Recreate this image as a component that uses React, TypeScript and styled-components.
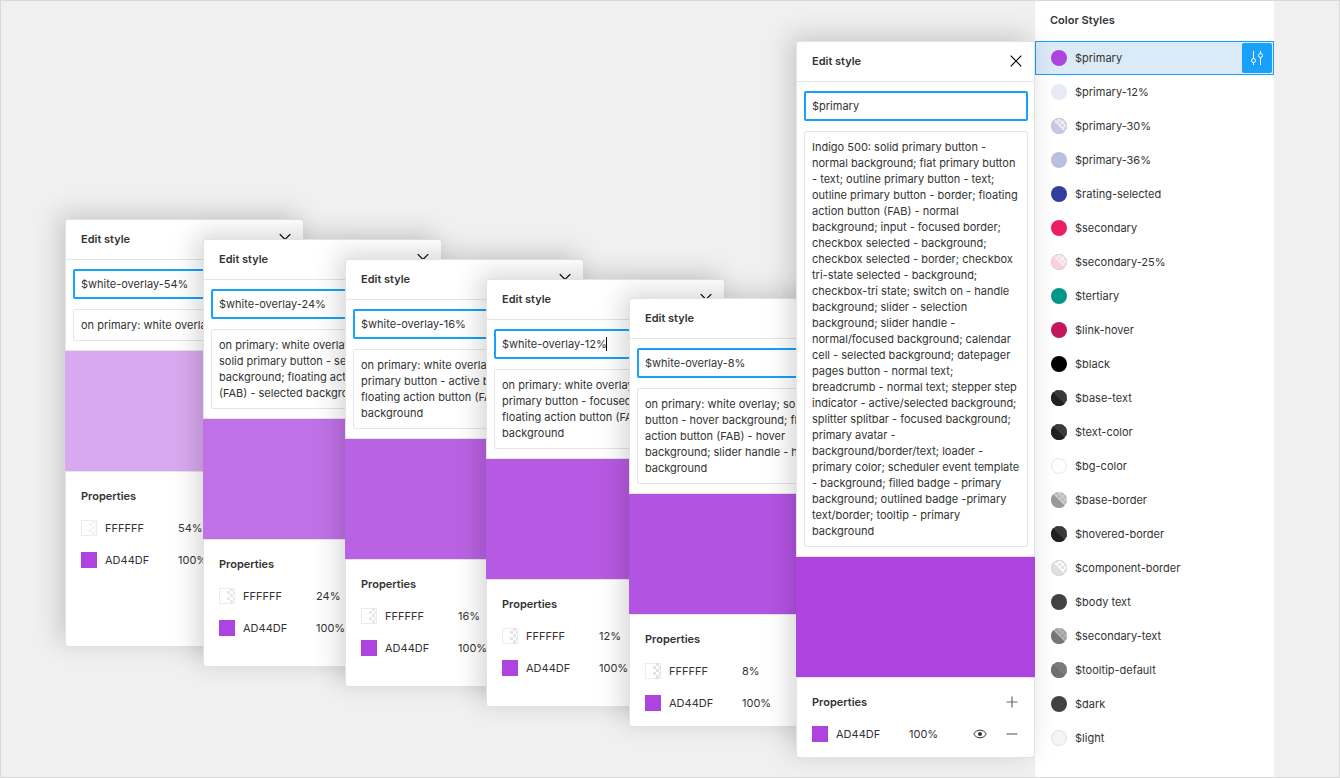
import React, { useId } from "react";
import styled, { createGlobalStyle } from "styled-components";

const GlobalStyle = createGlobalStyle`
  * { box-sizing: border-box; }
  body {
    margin: 0;
    background: #f0f0f0;
    color: #333333;
    font: 400 11px/16px Inter, "Liberation Sans", sans-serif;
  }
  button, input, textarea { font: inherit; color: inherit; }
`;

const BLUE = "#18a0fb";
const LINE = "#e5e5e5";
const BRAND = "#ad44df";

const Page = styled.main`
  display: flex;
  min-height: 100vh;
  padding-right: 65px;
  border: 1px solid #d9d9d9;
  overflow: hidden;
`;

const Cascade = styled.section`
  flex: 1;
  display: grid;
  grid-template-columns: 138px 142px 141px 143px 167px 239px;
  align-items: start;
  justify-content: end;
  position: relative;
  z-index: 1;
`;

const Slot = styled.div<{ $top: number }>`
  padding-top: ${(p) => p.$top}px;
`;

const Panel = styled.form`
  display: flex;
  flex-direction: column;
  width: 239px;
  min-height: 428px;
  position: relative;
  background: #ffffff;
  border: 1px solid #e3e3e3;
  border-radius: 3px;
  box-shadow: -6px -5px 26px rgba(0, 0, 0, 0.17);
`;

const PanelHeader = styled.header`
  display: flex;
  align-items: center;
  justify-content: space-between;
  height: 40px;
  padding: 0 10px 2px 15px;
  border-bottom: 1px solid ${LINE};
`;

const Heading = styled.h2`
  margin: 0;
  font-size: 11px;
  line-height: 16px;
  font-weight: 600;
`;

const IconButton = styled.button`
  display: flex;
  align-items: center;
  justify-content: center;
  width: 16px;
  height: 16px;
  padding: 0;
  border: 0;
  background: none;
  color: #000000;
`;

const Fields = styled.div`
  display: flex;
  flex-direction: column;
  gap: 10px;
  padding: 9px 6px 9px 7px;
`;

const NameWrap = styled.div`
  position: relative;
  display: flex;
`;

const NameInput = styled.input`
  width: 100%;
  height: 30px;
  padding: 0 6px;
  border: 2px solid ${BLUE};
  border-radius: 2px;
  background: transparent;
  outline: 0;
`;

const Caret = styled.span`
  position: absolute;
  top: 8px;
  left: 112px;
  width: 1px;
  height: 14px;
  background: #000000;
`;

const Description = styled.textarea`
  display: block;
  width: 100%;
  padding: 7px;
  border: 1px solid ${LINE};
  border-radius: 2px;
  background: transparent;
  outline: 0;
  resize: none;
  overflow: hidden;
  white-space: pre;
`;

const Preview = styled.div<{ $color: string }>`
  height: 122px;
  margin: 0 -1px;
  border-top: 1px solid ${LINE};
  border-bottom: 1px solid ${LINE};
  background: ${(p) => p.$color};
  background-clip: padding-box;
`;

const Properties = styled.div`
  padding: 8px 14px 7px 15px;
`;

const PropertyRow = styled.div`
  display: flex;
  align-items: center;
  height: 32px;
`;

const Chip = styled.span<{ $color: string }>`
  width: 16px;
  height: 16px;
  margin-right: 8px;
  background: ${(p) => p.$color};
`;

const Hex = styled.span`
  width: 73px;
`;

const RowActions = styled.span`
  display: flex;
  gap: 16px;
  margin-left: auto;
`;

const Sidebar = styled.aside`
  width: 239px;
  background: #ffffff;
`;

const SidebarHeader = styled.header`
  display: flex;
  align-items: center;
  height: 40px;
  padding: 0 15px 2px;
`;

const StyleList = styled.ul`
  margin: 0;
  padding: 0;
  list-style: none;
`;

const StyleRow = styled.li<{ $selected?: boolean }>`
  display: flex;
  align-items: center;
  gap: 8px;
  height: 34px;
  padding: 0 1px 0 ${(p) => (p.$selected ? 15 : 16)}px;
  border: ${(p) => (p.$selected ? `1px solid ${BLUE}` : "0")};
  background: ${(p) => (p.$selected ? "#daeaf7" : "transparent")};
`;

const EditButton = styled.button`
  display: flex;
  align-items: center;
  justify-content: center;
  width: 30px;
  height: 30px;
  margin-left: auto;
  padding: 0;
  border: 0;
  border-radius: 2px;
  background: ${BLUE};
  color: #ffffff;
`;

const ChevronIcon = () => (
  <svg width="12" height="12" viewBox="0 0 12 12" fill="none" stroke="currentColor" strokeWidth="1.2">
    <path d="M.7 1.200 6 6.500l5.300-5.300" />
  </svg>
);

const CloseIcon = () => (
  <svg width="12" height="12" viewBox="0 0 12 12" fill="none" stroke="currentColor" strokeWidth="1.2">
    <path d="M.7.7l10.600 10.600M11.300.7.7 11.300" />
  </svg>
);

const PlusIcon = () => (
  <svg width="12" height="12" viewBox="0 0 12 12" fill="none" stroke="#6b6b6b" strokeWidth="1.2">
    <path d="M.5 6h11M6 .5v11" />
  </svg>
);

const MinusIcon = () => (
  <svg width="12" height="12" viewBox="0 0 12 12" fill="none" stroke="#6b6b6b" strokeWidth="1.2">
    <path d="M.5 6h11" />
  </svg>
);

const EyeIcon = () => (
  <svg width="14" height="10" viewBox="0 0 14 10" fill="none" stroke="#333333">
    <path d="M.8 5C2 2.600 4.200 1.200 7 1.200S12 2.600 13.200 5C12 7.400 9.800 8.800 7 8.800S2 7.400.8 5z" />
    <circle cx="7" cy="5" r="2" fill="#333333" stroke="none" />
  </svg>
);

const AdjustIcon = () => (
  <svg width="12" height="14" viewBox="0 0 12 14" fill="none" stroke="currentColor">
    <path d="M2.500 0v7.500M2.500 11.500V14M9.500 0v2.500M9.500 6.500V14" />
    <circle cx="2.500" cy="9.500" r="2" />
    <circle cx="9.500" cy="4.500" r="2" />
  </svg>
);

const HalfClearIcon = ({ checks }: { checks: string }) => (
  <svg width="16" height="16" viewBox="0 0 16 16">
    <rect x=".5" y=".5" width="15" height="15" fill="#ffffff" stroke="#ececec" />
    <path
      fill={checks}
      d="M11 0h3v3h-3zM8 3h3v3H8zM14 3h2v3h-2zM11 6h3v3h-3zM8 9h3v3H8zM14 9h2v3h-2zM11 12h3v4h-3z"
    />
  </svg>
);

type Swatch = { name: string; color: string; tint?: string; checks?: string; ring?: string };

const StyleDot = ({ color, tint, checks, ring }: Swatch) => {
  const id = useId();
  return (
    <svg width="16" height="16" viewBox="0 0 16 16" aria-hidden="true">
      <clipPath id={id}>
        <circle cx="8" cy="8" r="8" />
      </clipPath>
      <g clipPath={`url(#${id})`}>
        <rect width="16" height="16" fill={tint ?? color} />
        {checks && (
          <path
            fill={checks}
            d="M4 0h3v3H4zM10 0h3v3h-3zM7 3h3v3H7zM13 3h3v3h-3zM10 6h3v3h-3zM13 9h3v3h-3zM4 6h3v3H4zM10 12h3v3h-3z"
          />
        )}
        {tint && <path d="M0 0l16 16H0z" fill={color} />}
      </g>
      {ring && <circle cx="8" cy="8" r="7.500" fill="none" stroke={ring} />}
    </svg>
  );
};

type PanelData = {
  name: string;
  top: number;
  lines: string[];
  preview: string;
  overlay?: string;
  checks?: string;
  caret?: boolean;
};

const panels: PanelData[] = [
  {
    name: "$white-overlay-54%", top: 218, preview: "#d9a9ef", overlay: "54%", checks: "#f1f1f1",
    lines: ["on primary: white overlay"],
  },
  {
    name: "$white-overlay-24%", top: 238, preview: "#c071e7", overlay: "24%", checks: "#e9e9e9",
    lines: [
      "on primary: white overlay;",
      "solid primary button - selected",
      "background; floating action button",
      "(FAB) - selected background",
    ],
  },
  {
    name: "$white-overlay-16%", top: 258, preview: "#ba62e4", overlay: "16%", checks: "#e7e7e7",
    lines: [
      "on primary: white overlay; solid",
      "primary button - active background;",
      "floating action button (FAB) - active",
      "background",
    ],
  },
  {
    name: "$white-overlay-12%", top: 278, preview: "#b75ae3", overlay: "12%", checks: "#e5e5e5", caret: true,
    lines: [
      "on primary: white overlay; solid",
      "primary button - focused background;",
      "floating action button (FAB) - focused",
      "background",
    ],
  },
  {
    name: "$white-overlay-8%", top: 297, preview: "#b353e2", overlay: "8%", checks: "#e3e3e3",
    lines: [
      "on primary: white overlay; solid primary",
      "button - hover background; floating",
      "action button (FAB) - hover",
      "background; slider handle - hover",
      "background",
    ],
  },
  {
    name: "$primary", top: 40, preview: BRAND,
    lines: [
      "Indigo 500: solid primary button -",
      "normal background; flat primary button",
      "- text; outline primary button - text;",
      "outline primary button - border; floating",
      "action button (FAB) - normal",
      "background; input - focused border;",
      "checkbox selected - background;",
      "checkbox selected - border; checkbox",
      "tri-state selected - background;",
      "checkbox-tri state; switch on - handle",
      "background; slider - selection",
      "background; slider handle -",
      "normal/focused background; calendar",
      "cell - selected background; datepager",
      "pages button - normal text;",
      "breadcrumb - normal text; stepper step",
      "indicator - active/selected background;",
      "splitter splitbar - focused background;",
      "primary avatar -",
      "background/border/text; loader -",
      "primary color; scheduler event template",
      "- background; filled badge - primary",
      "background; outlined badge -primary",
      "text/border; tooltip - primary",
      "background",
    ],
  },
];

const swatches: Swatch[] = [
  { name: "$primary", color: BRAND },
  { name: "$primary-12%", color: "#e8eaf6" },
  { name: "$primary-30%", color: "#c5c9e9", tint: "#eeeff5", checks: "#d8d9e2", ring: "#c3c5d6" },
  { name: "$primary-36%", color: "#b8bfe3" },
  { name: "$rating-selected", color: "#303f9f" },
  { name: "$secondary", color: "#e91e63" },
  { name: "$secondary-25%", color: "#fdcfdf", tint: "#fbf1f5", checks: "#eddfe5", ring: "#e8cbd5" },
  { name: "$tertiary", color: "#009688" },
  { name: "$link-hover", color: "#c2185b" },
  { name: "$black", color: "#000000" },
  { name: "$base-text", color: "#212121", tint: "#3d3d3d", checks: "#383838" },
  { name: "$text-color", color: "#212121", tint: "#3d3d3d", checks: "#383838" },
  { name: "$bg-color", color: "#ffffff", ring: "#e5e5e5" },
  { name: "$base-border", color: "#999999", tint: "#cccccc", checks: "#bcbcbc" },
  { name: "$hovered-border", color: "#212121", tint: "#3d3d3d", checks: "#383838" },
  { name: "$component-border", color: "#e0e0e0", tint: "#ffffff", checks: "#e3e3e3", ring: "#d6d6d6" },
  { name: "$body text", color: "#424242" },
  { name: "$secondary-text", color: "#757575", tint: "#b3b3b3", checks: "#a3a3a3" },
  { name: "$tooltip-default", color: "#6f706f", tint: "#7d7d7d", checks: "#787878" },
  { name: "$dark", color: "#424242" },
  { name: "$light", color: "#f5f5f5", ring: "#e0e0e0" },
];

const StylePanel = ({ data }: { data: PanelData }) => {
  const main = !data.overlay;
  return (
    <Panel onSubmit={(e) => e.preventDefault()}>
      <PanelHeader>
        <Heading>Edit style</Heading>
        <IconButton type="button" aria-label={main ? "Close" : "Collapse"}>
          {main ? <CloseIcon /> : <ChevronIcon />}
        </IconButton>
      </PanelHeader>
      <Fields>
        <NameWrap>
          <NameInput aria-label="Style name" defaultValue={data.name} spellCheck={false} />
          {data.caret && <Caret />}
        </NameWrap>
        <Description
          aria-label="Description"
          rows={data.lines.length}
          defaultValue={data.lines.join("\n")}
          spellCheck={false}
        />
      </Fields>
      <Preview $color={data.preview} />
      <Properties>
        <PropertyRow>
          <Heading>Properties</Heading>
          {main && (
            <RowActions>
              <IconButton type="button" aria-label="Add property"><PlusIcon /></IconButton>
            </RowActions>
          )}
        </PropertyRow>
        {data.overlay && (
          <PropertyRow>
            <Chip $color="#ffffff"><HalfClearIcon checks={data.checks ?? LINE} /></Chip>
            <Hex>FFFFFF</Hex>
            <span>{data.overlay}</span>
          </PropertyRow>
        )}
        <PropertyRow>
          <Chip $color={BRAND} />
          <Hex>AD44DF</Hex>
          <span>100%</span>
          {main && (
            <RowActions>
              <IconButton type="button" aria-label="Toggle visibility"><EyeIcon /></IconButton>
              <IconButton type="button" aria-label="Remove property"><MinusIcon /></IconButton>
            </RowActions>
          )}
        </PropertyRow>
      </Properties>
    </Panel>
  );
};

export default function App() {
  return (
    <>
      <GlobalStyle />
      <Page>
        <Cascade>
          {panels.map((panel) => (
            <Slot key={panel.name} $top={panel.top}>
              <StylePanel data={panel} />
            </Slot>
          ))}
        </Cascade>
        <Sidebar>
          <SidebarHeader>
            <Heading>Color Styles</Heading>
          </SidebarHeader>
          <StyleList>
            {swatches.map((swatch, i) => (
              <StyleRow key={swatch.name} $selected={i === 0}>
                <StyleDot {...swatch} />
                <span>{swatch.name}</span>
                {i === 0 && (
                  <EditButton type="button" aria-label="Edit style"><AdjustIcon /></EditButton>
                )}
              </StyleRow>
            ))}
          </StyleList>
        </Sidebar>
      </Page>
    </>
  );
}
